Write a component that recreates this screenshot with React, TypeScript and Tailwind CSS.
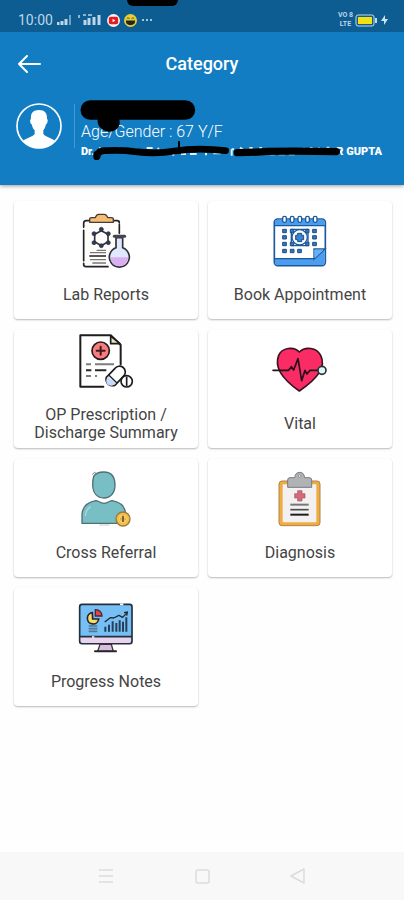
import type { ReactNode } from "react";

type Category = {
  label: string;
  icon: ReactNode;
};

function LabReportsIcon() {
  return (
    <svg className="size-[60px]" viewBox="48 36 180 180" fill="none" aria-hidden="true">
      <rect x="71" y="62" width="107" height="138" rx="7" fill="#fffdfa" />
      <path d="M92 62H79q-8 0-8 8v12M71 91v91M71 190v3q0 7 7 7h66M160 62h12q6 0 6 7M178 74v26" stroke="#222229" strokeWidth="5" strokeLinecap="round" />
      <path d="M89 67V58q0-5 6-5h11q3-10 10-10h17q7 0 10 10h11q6 0 6 5v9z" fill="#f5bd74" stroke="#493b34" strokeWidth="4" strokeLinejoin="round" />
      <path d="M124 92l20 11v22l-20 12-20-12v-22z" stroke="#303444" strokeWidth="5" />
      <g fill="#303b58" stroke="#292c38" strokeWidth="2">
        <circle cx="124" cy="88" r="6" />
        <circle cx="145" cy="101" r="6" />
        <circle cx="145" cy="128" r="6" />
        <circle cx="124" cy="137" r="6" />
        <circle cx="102" cy="128" r="6" />
        <circle cx="102" cy="101" r="6" />
      </g>
      <path d="M110 151h28M90 158h48M90 179h48M97 189h41" stroke="#777" strokeWidth="4" />
      <path d="M88 168h50" stroke="#333" strokeWidth="5" />
      <path d="M168 113v30a30 30 0 1 0 20 0v-30z" fill="#dfe8fd" stroke="#30303c" strokeWidth="5" />
      <path d="M152 172h53q-1 26-27 27-25-1-26-27z" fill="#d8b0f0" />
      <path d="M163 109h31" stroke="#44464e" strokeWidth="9" strokeLinecap="round" />
    </svg>
  );
}

function AppointmentIcon() {
  return (
    <svg className="size-[60px]" viewBox="44 36 180 180" fill="none" aria-hidden="true">
      <rect x="57" y="57" width="153" height="140" rx="10" fill="#fff" stroke="#1b5a9d" strokeWidth="5" />
      <path d="M59 76V65q0-6 6-6h137q6 0 6 6v11zM59 177h118l31-30v40q0 8-8 8H68q-9 0-9-8z" fill="#4c9cef" />
      <path d="M57 77h153M57 176h119M176 178v-31h33z" stroke="#1b5a9d" strokeWidth="4" />
      <path d="M178 149h27l-27 26z" fill="#65b0fc" />
      <g fill="#fff" stroke="#1b5a9d" strokeWidth="4">
        <rect x="82" y="49" width="11" height="18" rx="5" />
        <rect x="105" y="49" width="11" height="18" rx="5" />
        <rect x="128" y="49" width="11" height="18" rx="5" />
        <rect x="151" y="49" width="11" height="18" rx="5" />
        <rect x="174" y="49" width="11" height="18" rx="5" />
      </g>
      <path d="M108 88h50v49h-50z" stroke="#1b5a9d" strokeWidth="4" />
      <g fill="#3477bd" stroke="#1b4f87" strokeWidth="3">
        <path d="M82 88h11v10H82zM82 107h11v10H82zM82 127h11v10H82zM82 148h11v10H82zM105 148h11v10h-11zM127 148h11v10h-11zM172 88h11v10h-11zM172 107h11v10h-11zM172 127h11v10h-11z" />
        <path d="M105 88h10v10h-10zM151 88h10v10h-10zM105 127h10v10h-10zM151 127h10v10h-10z" />
      </g>
      <circle cx="133" cy="112" r="23" fill="#fff" stroke="#1b5a9d" strokeWidth="4" />
      <path d="M127 100h12v6h6v13h-6v6h-12v-6h-6v-13h6z" fill="#3c83ce" stroke="#1b4f87" strokeWidth="3" />
    </svg>
  );
}

function PrescriptionIcon() {
  return (
    <svg className="size-[60px]" viewBox="48 21 180 180" fill="none" aria-hidden="true">
      <path d="M130 185H61V31h92l29 29v58" stroke="#1d1d20" strokeWidth="6" strokeLinejoin="round" strokeLinecap="round" />
      <path d="M152 33v23h28z" fill="#eee2ba" stroke="#1d1d20" strokeWidth="5" strokeLinejoin="round" />
      <circle cx="122" cy="77" r="26" fill="#f67d7d" stroke="#25191b" strokeWidth="5" />
      <path d="M122 65v24M110 77h24" stroke="#43191b" strokeWidth="6" strokeLinecap="round" />
      <path d="M78 118h15M105 118h57M78 153h15M105 153h6" stroke="#7d7d7d" strokeWidth="6" />
      <path d="M78 136h16M105 136h34" stroke="#28282a" strokeWidth="6" />
      <path d="M139 157l26-27a17 17 0 0 1 27 22l-25 27a19 19 0 0 1-28-22z" fill="#fff" stroke="#1d1d20" strokeWidth="5" />
      <path d="M144 155l24 20c-13 16-41 2-24-20z" fill="#c7d8ff" />
      <path d="M146 150l25 24" stroke="#1d1d20" strokeWidth="4" />
      <circle cx="200" cy="169" r="17" fill="#fff" stroke="#1d1d20" strokeWidth="5" />
      <path d="M200 155v28" stroke="#1d1d20" strokeWidth="5" />
    </svg>
  );
}

function VitalIcon() {
  return (
    <svg className="size-[60px]" viewBox="44 48 180 180" fill="none" aria-hidden="true">
      <path d="M132 81c-17-18-52-13-62 10-13 33 6 68 62 107 60-41 80-74 64-107-12-23-46-28-64-10z" fill="#fb2b66" stroke="#39141f" strokeWidth="5" strokeLinejoin="round" />
      <path d="M53 136h47l8-11 7 10 13-34 11 66 10-31 6 11 9-11h31" stroke="#241018" strokeWidth="5" strokeLinecap="round" strokeLinejoin="round" />
      <circle cx="200" cy="136" r="12" fill="#dff6fb" stroke="#273238" strokeWidth="5" />
    </svg>
  );
}

function ReferralIcon() {
  return (
    <svg className="size-[60px]" viewBox="48 30 180 180" fill="none" aria-hidden="true">
      <path d="M101 49c6-12 21-13 31-13 21 0 33 14 33 40 0 23-14 38-33 38-20 0-33-14-34-39 0-11 1-19 3-26z" fill="#77bfc5" stroke="#536f75" strokeWidth="4" />
      <path d="M97 43l7-6 8 7M97 62l5-4" stroke="#777" strokeWidth="3" />
      <path d="M66 190v-27c1-22 17-36 41-41 9 0 12 7 25 8 13-1 16-8 25-8 26 5 40 21 40 43v25z" fill="#77bfc5" stroke="#536f75" strokeWidth="4" />
      <path d="M76 166c1-12 7-20 15-25" stroke="#a8dadf" strokeWidth="4" strokeLinecap="round" />
      <path d="M118 195h31" stroke="#aaa" strokeWidth="2" />
      <circle cx="189" cy="177" r="21" fill="#f4bd45" stroke="#9b7944" strokeWidth="4" />
      <circle cx="189" cy="177" r="13" fill="#f8cf63" />
      <path d="M189 167v19" stroke="#66502c" strokeWidth="5" />
      <path d="M183 173v8M195 173v8" stroke="#aa8136" strokeWidth="2" />
    </svg>
  );
}

function DiagnosisIcon() {
  return (
    <svg className="size-[60px]" viewBox="44 30 180 180" fill="none" aria-hidden="true">
      <rect x="71" y="63" width="123" height="134" rx="9" fill="#f1ab3e" stroke="#a98551" strokeWidth="3" />
      <path d="M82 73h101v114H82z" fill="#f2f0f1" />
      <path d="M97 82V60q0-7 7-7h14q2-16 15-16t15 16h14q7 0 7 7v22z" fill="#b1b2b3" stroke="#777a7d" strokeWidth="3" />
      <circle cx="133" cy="48" r="4" fill="#eee" stroke="#777a7d" strokeWidth="2" />
      <path d="M127 92h13v9h9v13h-9v9h-13v-9h-9v-13h9z" fill="#db6678" stroke="#985864" strokeWidth="2" />
      <path d="M105 134h55" stroke="#777" strokeWidth="6" />
      <path d="M105 149h55" stroke="#4d4d4d" strokeWidth="5" />
      <path d="M105 164h55" stroke="#1d1d1f" strokeWidth="6" />
    </svg>
  );
}

function ProgressIcon() {
  return (
    <svg className="size-[60px]" viewBox="48 27 180 180" fill="none" aria-hidden="true">
      <rect x="59" y="43" width="157" height="118" rx="7" fill="#76bff4" stroke="#25303d" strokeWidth="5" />
      <path d="M62 141h151v12q0 6-6 6H69q-7 0-7-6z" fill="#ead3ec" />
      <path d="M59 140h157" stroke="#25303d" strokeWidth="5" />
      <path d="M120 163h34l6 21h-47z" fill="#d9bddd" stroke="#39323e" strokeWidth="4" />
      <path d="M105 184h63" stroke="#28262d" strokeWidth="6" strokeLinecap="round" />
      <path d="M97 68a17 17 0 1 0 19 19H98z" fill="#f9dd68" stroke="#27252b" strokeWidth="5" />
      <path d="M106 59q19 1 20 19h-20z" fill="#df4652" stroke="#542433" strokeWidth="4" />
      <path d="M86 108h26M86 116h26M86 124h26" stroke="#527894" strokeWidth="5" />
      <path d="M136 125v-15M147 125v-21M158 125v-31M169 125v-26M179 125v-34M189 125v-30M199 125V82" stroke="#263e59" strokeWidth="6" />
      <path d="M134 96l17-13 10 1 16-8 11 6 14-15" stroke="#1f2935" strokeWidth="4" strokeLinejoin="round" />
      <path d="M192 68l10-2-2 11" stroke="#1f2935" strokeWidth="4" />
      <path d="M180 43h10M96 141h7" stroke="#fff" strokeWidth="5" />
    </svg>
  );
}

const categories: Category[] = [
  { label: "Lab Reports", icon: <LabReportsIcon /> },
  { label: "Book Appointment", icon: <AppointmentIcon /> },
  { label: "OP Prescription / Discharge Summary", icon: <PrescriptionIcon /> },
  { label: "Vital", icon: <VitalIcon /> },
  { label: "Cross Referral", icon: <ReferralIcon /> },
  { label: "Diagnosis", icon: <DiagnosisIcon /> },
  { label: "Progress Notes", icon: <ProgressIcon /> },
];

function StatusBar() {
  return (
    <div className="relative flex h-8 items-center bg-[#0d5d92] pt-2 pr-4 pl-[18px] text-[#bed6e6]">
      <div className="absolute top-0 left-[127px] h-[6px] w-[51px] rounded-b-lg bg-black" />
      <span className="text-sm leading-4">10:00</span>
      <svg className="ml-1 h-4 w-[46px]" viewBox="0 0 46 16" fill="none" aria-hidden="true">
        <path d="M1 13v-3M5 13v-4M9 13V7" stroke="#bed6e6" strokeWidth="3" />
        <path d="M13 13V3" stroke="#6d9fbe" strokeWidth="2" />
        <path d="M22 3v3M26 3h3M31 3h4" stroke="#8eb5ce" strokeWidth="2" />
        <path d="M28 13V8M32 13V6M37 13V5M42 13V3" stroke="#bed6e6" strokeWidth="3" />
      </svg>
      <svg className="ml-1 size-[13px]" viewBox="0 0 14 14" aria-hidden="true">
        <circle cx="7" cy="7" r="7" fill="#f5f2f2" />
        <rect x="2" y="3" width="10" height="8" rx="2" fill="#e51b20" />
        <path d="M6 5l3 2-3 2z" fill="#fff" />
      </svg>
      <svg className="ml-1 size-[13px]" viewBox="0 0 14 14" aria-hidden="true">
        <circle cx="7" cy="7" r="7" fill="#e5cf39" />
        <path d="M2 7h10q0 5-5 5T2 7z" fill="#25251b" />
        <path d="M3 5q1-2 3 0M8 5q2-2 3 0" stroke="#55501f" fill="none" />
      </svg>
      <svg className="ml-1 h-4 w-3" viewBox="0 0 12 16" fill="#a5c6da" aria-hidden="true">
        <path d="M1 7h2v2H1zM5 7h2v2H5zM9 7h2v2H9z" />
      </svg>
      <div className="ml-auto flex items-center">
        <div className="flex flex-col items-center text-[7px] leading-[9px] font-bold">
          <span>VO 8</span>
          <span>LTE</span>
        </div>
        <svg className="ml-[2px] h-[13px] w-[22px]" viewBox="0 0 22 13" aria-hidden="true">
          <rect x="1" y="1" width="18" height="11" rx="2" fill="none" stroke="#c8d9d9" />
          <rect x="3" y="3" width="14" height="7" fill="#f4df12" />
          <path d="M21 4v5" stroke="#c8d9d9" strokeWidth="2" />
        </svg>
        <svg className="ml-1 h-[10px] w-[7px]" viewBox="0 0 7 10" fill="#cfe2ee" aria-hidden="true">
          <path d="M4 0L0 6h3v4l4-6H4z" />
        </svg>
      </div>
    </div>
  );
}

function PatientSummary() {
  return (
    <section className="relative flex items-start pt-1 pb-[25px] pl-4">
      <svg className="mt-[3px] size-[46px] shrink-0" viewBox="49 39 138 138" aria-hidden="true">
        <circle cx="118" cy="108" r="66" fill="none" stroke="#fff" strokeWidth="5" />
        <path d="M118 60c17 0 25 10 24 26 4 3 2 14-3 17-2 9-5 14-8 18v11c8 10 24 12 35 20-10 13-28 23-48 23s-38-10-48-23c11-8 27-10 35-20v-11c-4-4-7-9-9-18-5-3-6-14-2-17-2-16 7-26 24-26z" fill="#fff" />
      </svg>
      <div className="mt-1 ml-3 h-11 w-px bg-[#4798cd]" />
      <div className="ml-[6px] text-white">
        <div className="h-5" />
        <p className="text-base leading-6 font-light">Age/Gender : 67 Y/F</p>
        <p className="flex w-[301px] justify-between text-[11px] leading-4 font-black">
          <span>Dr.</span>
          <span>R GUPTA</span>
        </p>
      </div>
      {/* marker strokes over the patient and doctor names */}
      <svg className="absolute top-0 left-0 h-[89px] w-[404px]" viewBox="0 18 1212 267" fill="none" strokeLinecap="round" strokeLinejoin="round" aria-hidden="true">
        <path d="M300 172v8M320 174v12M345 174h15M374 173v18M400 176l12 15M440 174h18M475 173v17M520 174v23M543 192h15M570 192h20M618 188v8M640 190h22M695 178v19M695 178h7M720 173l8 5M748 174h10M778 174h8M810 193h15M837 193h18M866 193h18M910 174l7 6M930 174h8M955 173l7 7M980 173h8" stroke="#e2eff8" strokeWidth="6" strokeLinecap="butt" />
        <path d="M271 60H556" stroke="#000" strokeWidth="59" />
        <path d="M318 94q8 9 16 3" stroke="#000" strokeWidth="51" />
        <path d="M292 198q3-17 24-16 50-3 89 3 65 8 118-2 70-11 154-1" stroke="#000" strokeWidth="20" />
        <path d="M290 193v7" stroke="#000" strokeWidth="20" />
        <path d="M537 155v24" stroke="#000" strokeWidth="6" />
        <path d="M712 188q50 0 89-4 100-2 208 1" stroke="#000" strokeWidth="22" />
      </svg>
    </section>
  );
}

function CategoryCard({ label, icon }: Category) {
  return (
    <button
      type="button"
      className="flex h-[118px] flex-col items-center justify-center gap-3.5 rounded bg-white px-4 pb-1 shadow-[0_1px_2px_rgba(0,0,0,0.28)]"
    >
      {icon}
      <span className="text-base leading-[18px] text-[#444]">{label}</span>
    </button>
  );
}

function NavigationBar() {
  return (
    <nav className="flex h-12 items-center justify-center gap-20 bg-[#f8f8f8] text-[#dcdcdc]">
      <button type="button" aria-label="Recent apps">
        <svg className="size-4" viewBox="0 0 16 16" fill="none" stroke="currentColor" strokeWidth="1.5">
          <path d="M1 2h14M1 8h14M1 14h14" />
        </svg>
      </button>
      <button type="button" aria-label="Home">
        <svg className="size-4" viewBox="0 0 16 16" fill="none" stroke="currentColor" strokeWidth="1.5">
          <rect x="2" y="2" width="13" height="13" rx="2" />
        </svg>
      </button>
      <button type="button" aria-label="Back">
        <svg className="size-4" viewBox="0 0 16 16" fill="none" stroke="currentColor" strokeWidth="1.5" strokeLinejoin="round">
          <path d="M1 8l13-7v14z" />
        </svg>
      </button>
    </nav>
  );
}

export default function App() {
  return (
    <div className="flex min-h-screen flex-col bg-[#fefefe] font-['Roboto',sans-serif]">
      <StatusBar />
      <header className="bg-[#127dc2] shadow-[0_1px_4px_rgba(0,0,0,0.4)]">
        <div className="grid h-16 grid-cols-[24px_1fr_24px] items-center px-[17px] text-white">
          <button type="button" aria-label="Back">
            <svg className="size-6" viewBox="0 0 24 24" fill="none" stroke="currentColor" strokeWidth="2" strokeLinecap="round" strokeLinejoin="round">
              <path d="M23 12H2M10 4l-8 8 8 8" />
            </svg>
          </button>
          <h1 className="text-center text-lg leading-6 font-medium">Category</h1>
        </div>
        <PatientSummary />
      </header>
      <main className="grid flex-1 grid-cols-2 content-start gap-x-[10px] gap-y-[11px] pt-4 pr-3 pb-4 pl-[14px]">
        {categories.map((category) => (
          <CategoryCard key={category.label} label={category.label} icon={category.icon} />
        ))}
      </main>
      <NavigationBar />
    </div>
  );
}
